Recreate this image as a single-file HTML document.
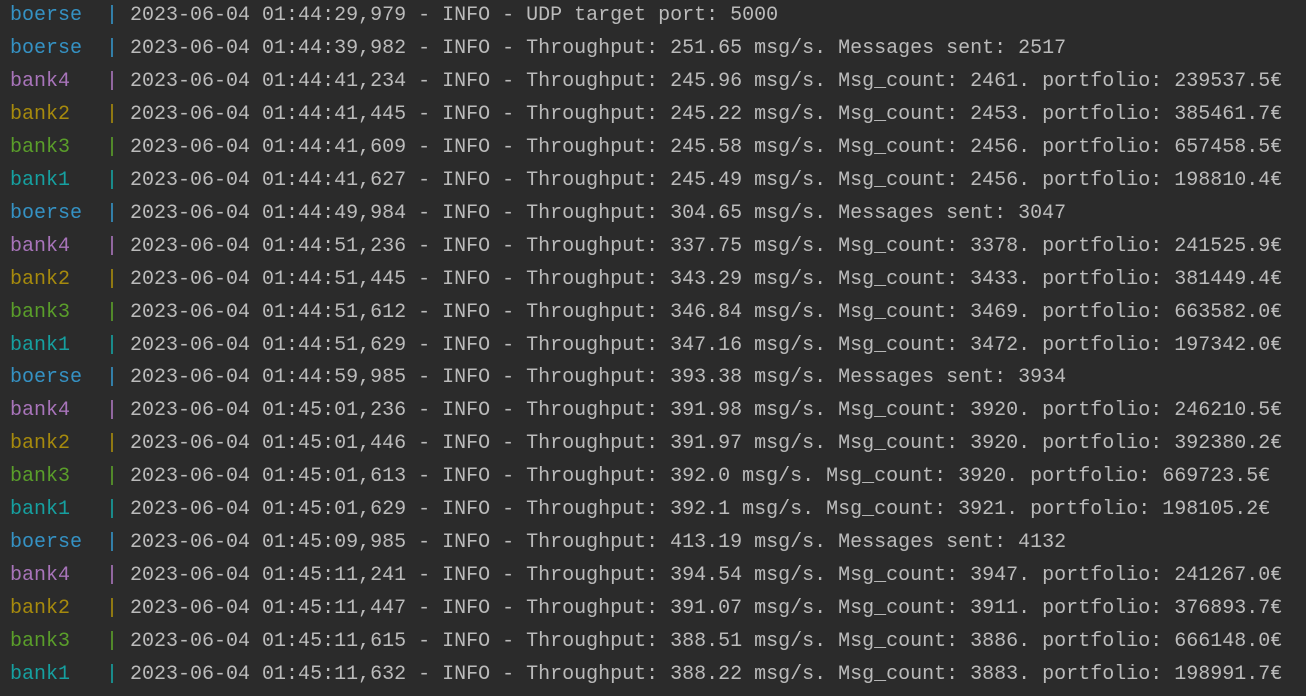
<!DOCTYPE html>
<html><head><meta charset="utf-8"><style>
html,body{margin:0;padding:0;background:#2b2b2b;width:1306px;height:696px;overflow:hidden}
pre{margin:0;position:absolute;left:10px;top:0px;font-family:"Liberation Mono",monospace;font-size:20px;line-height:32.95px;color:#bbbbbb;white-space:pre}
.b{color:#3592c4}.k4{color:#a874ba}.k2{color:#a68a0d}.k3{color:#5a9e2a}.k1{color:#16a0a0}
</style></head><body><pre><span class="b">boerse  |</span> 2023-06-04 01:44:29,979 - INFO - UDP target port: 5000
<span class="b">boerse  |</span> 2023-06-04 01:44:39,982 - INFO - Throughput: 251.65 msg/s. Messages sent: 2517
<span class="k4">bank4   |</span> 2023-06-04 01:44:41,234 - INFO - Throughput: 245.96 msg/s. Msg_count: 2461. portfolio: 239537.5€
<span class="k2">bank2   |</span> 2023-06-04 01:44:41,445 - INFO - Throughput: 245.22 msg/s. Msg_count: 2453. portfolio: 385461.7€
<span class="k3">bank3   |</span> 2023-06-04 01:44:41,609 - INFO - Throughput: 245.58 msg/s. Msg_count: 2456. portfolio: 657458.5€
<span class="k1">bank1   |</span> 2023-06-04 01:44:41,627 - INFO - Throughput: 245.49 msg/s. Msg_count: 2456. portfolio: 198810.4€
<span class="b">boerse  |</span> 2023-06-04 01:44:49,984 - INFO - Throughput: 304.65 msg/s. Messages sent: 3047
<span class="k4">bank4   |</span> 2023-06-04 01:44:51,236 - INFO - Throughput: 337.75 msg/s. Msg_count: 3378. portfolio: 241525.9€
<span class="k2">bank2   |</span> 2023-06-04 01:44:51,445 - INFO - Throughput: 343.29 msg/s. Msg_count: 3433. portfolio: 381449.4€
<span class="k3">bank3   |</span> 2023-06-04 01:44:51,612 - INFO - Throughput: 346.84 msg/s. Msg_count: 3469. portfolio: 663582.0€
<span class="k1">bank1   |</span> 2023-06-04 01:44:51,629 - INFO - Throughput: 347.16 msg/s. Msg_count: 3472. portfolio: 197342.0€
<span class="b">boerse  |</span> 2023-06-04 01:44:59,985 - INFO - Throughput: 393.38 msg/s. Messages sent: 3934
<span class="k4">bank4   |</span> 2023-06-04 01:45:01,236 - INFO - Throughput: 391.98 msg/s. Msg_count: 3920. portfolio: 246210.5€
<span class="k2">bank2   |</span> 2023-06-04 01:45:01,446 - INFO - Throughput: 391.97 msg/s. Msg_count: 3920. portfolio: 392380.2€
<span class="k3">bank3   |</span> 2023-06-04 01:45:01,613 - INFO - Throughput: 392.0 msg/s. Msg_count: 3920. portfolio: 669723.5€
<span class="k1">bank1   |</span> 2023-06-04 01:45:01,629 - INFO - Throughput: 392.1 msg/s. Msg_count: 3921. portfolio: 198105.2€
<span class="b">boerse  |</span> 2023-06-04 01:45:09,985 - INFO - Throughput: 413.19 msg/s. Messages sent: 4132
<span class="k4">bank4   |</span> 2023-06-04 01:45:11,241 - INFO - Throughput: 394.54 msg/s. Msg_count: 3947. portfolio: 241267.0€
<span class="k2">bank2   |</span> 2023-06-04 01:45:11,447 - INFO - Throughput: 391.07 msg/s. Msg_count: 3911. portfolio: 376893.7€
<span class="k3">bank3   |</span> 2023-06-04 01:45:11,615 - INFO - Throughput: 388.51 msg/s. Msg_count: 3886. portfolio: 666148.0€
<span class="k1">bank1   |</span> 2023-06-04 01:45:11,632 - INFO - Throughput: 388.22 msg/s. Msg_count: 3883. portfolio: 198991.7€</pre></body></html>
